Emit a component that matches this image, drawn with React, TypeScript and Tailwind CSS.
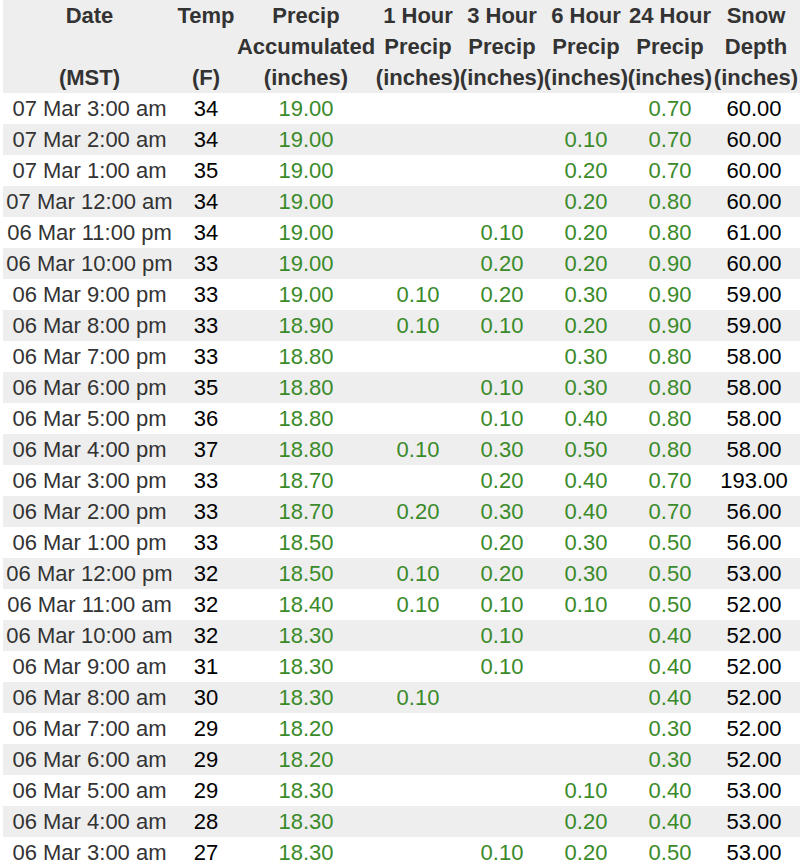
import React from "react";

type Row = [string, string, string, string, string, string, string, string];

const rows: Row[] = [
  ["07 Mar 3:00 am", "34", "19.00", "", "", "", "0.70", "60.00"],
  ["07 Mar 2:00 am", "34", "19.00", "", "", "0.10", "0.70", "60.00"],
  ["07 Mar 1:00 am", "35", "19.00", "", "", "0.20", "0.70", "60.00"],
  ["07 Mar 12:00 am", "34", "19.00", "", "", "0.20", "0.80", "60.00"],
  ["06 Mar 11:00 pm", "34", "19.00", "", "0.10", "0.20", "0.80", "61.00"],
  ["06 Mar 10:00 pm", "33", "19.00", "", "0.20", "0.20", "0.90", "60.00"],
  ["06 Mar 9:00 pm", "33", "19.00", "0.10", "0.20", "0.30", "0.90", "59.00"],
  ["06 Mar 8:00 pm", "33", "18.90", "0.10", "0.10", "0.20", "0.90", "59.00"],
  ["06 Mar 7:00 pm", "33", "18.80", "", "", "0.30", "0.80", "58.00"],
  ["06 Mar 6:00 pm", "35", "18.80", "", "0.10", "0.30", "0.80", "58.00"],
  ["06 Mar 5:00 pm", "36", "18.80", "", "0.10", "0.40", "0.80", "58.00"],
  ["06 Mar 4:00 pm", "37", "18.80", "0.10", "0.30", "0.50", "0.80", "58.00"],
  ["06 Mar 3:00 pm", "33", "18.70", "", "0.20", "0.40", "0.70", "193.00"],
  ["06 Mar 2:00 pm", "33", "18.70", "0.20", "0.30", "0.40", "0.70", "56.00"],
  ["06 Mar 1:00 pm", "33", "18.50", "", "0.20", "0.30", "0.50", "56.00"],
  ["06 Mar 12:00 pm", "32", "18.50", "0.10", "0.20", "0.30", "0.50", "53.00"],
  ["06 Mar 11:00 am", "32", "18.40", "0.10", "0.10", "0.10", "0.50", "52.00"],
  ["06 Mar 10:00 am", "32", "18.30", "", "0.10", "", "0.40", "52.00"],
  ["06 Mar 9:00 am", "31", "18.30", "", "0.10", "", "0.40", "52.00"],
  ["06 Mar 8:00 am", "30", "18.30", "0.10", "", "", "0.40", "52.00"],
  ["06 Mar 7:00 am", "29", "18.20", "", "", "", "0.30", "52.00"],
  ["06 Mar 6:00 am", "29", "18.20", "", "", "", "0.30", "52.00"],
  ["06 Mar 5:00 am", "29", "18.30", "", "", "0.10", "0.40", "53.00"],
  ["06 Mar 4:00 am", "28", "18.30", "", "", "0.20", "0.40", "53.00"],
  ["06 Mar 3:00 am", "27", "18.30", "", "0.10", "0.20", "0.50", "53.00"],
];

const headers: [string, string, string][] = [
  ["Date", "", "(MST)"],
  ["Temp", "", "(F)"],
  ["Precip", "Accumulated", "(inches)"],
  ["1 Hour", "Precip", "(inches)"],
  ["3 Hour", "Precip", "(inches)"],
  ["6 Hour", "Precip", "(inches)"],
  ["24 Hour", "Precip", "(inches)"],
  ["Snow", "Depth", "(inches)"],
];

const gridCols =
  "grid grid-cols-[173px_60px_140px_84px_84px_84px_84px_1fr]";

export default function App() {
  return (
    <div
      className="w-[800px] bg-white pl-[3px] text-[22px] leading-[31px]"
      style={{ fontFamily: '"Liberation Sans", Arial, sans-serif' }}
    >
      <div className={`${gridCols} bg-[#eeeeee] font-bold text-[#333333]`}>
        {headers.map((h, i) => (
          <div key={i} className="flex flex-col items-center whitespace-nowrap">
            <span className="h-[31px]">{h[0]}</span>
            <span className="h-[31px]">{h[1]}</span>
            <span className="h-[31px]">{h[2]}</span>
          </div>
        ))}
      </div>
      {rows.map((r, i) => (
        <div
          key={i}
          className={`${gridCols} h-[31px] whitespace-nowrap text-center ${
            i % 2 === 1 ? "bg-[#eeeeee]" : "bg-white"
          }`}
        >
          <div className="text-[#333333]">{r[0]}</div>
          <div className="text-black">{r[1]}</div>
          <div className="text-[#3a8a2a]">{r[2]}</div>
          <div className="text-[#3a8a2a]">{r[3]}</div>
          <div className="text-[#3a8a2a]">{r[4]}</div>
          <div className="text-[#3a8a2a]">{r[5]}</div>
          <div className="text-[#3a8a2a]">{r[6]}</div>
          <div className="pr-[4px] text-black">{r[7]}</div>
        </div>
      ))}
    </div>
  );
}
